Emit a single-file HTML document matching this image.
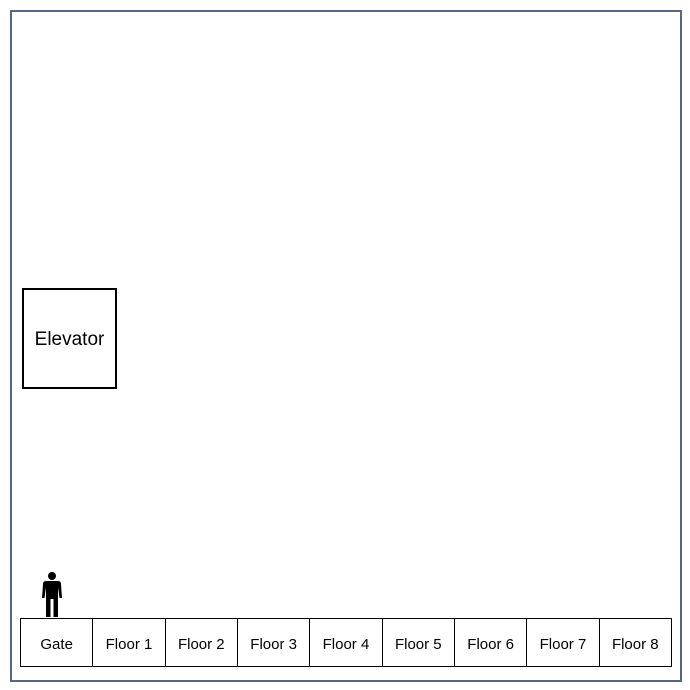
<!DOCTYPE html>
<html><head><style>
body{margin:0;width:690px;height:690px;background:#fff;position:relative;overflow:hidden;font-family:"Liberation Sans",sans-serif;}
.outer{position:absolute;left:10px;top:10px;width:668px;height:668px;border:2px solid #56677f;}
.elev{position:absolute;left:22px;top:288px;width:91px;height:97px;border:2px solid #000;display:flex;align-items:center;justify-content:center;font-size:19px;padding-top:3px;box-sizing:content-box;height:94px;}
.row{position:absolute;left:20px;top:618px;height:49px;width:652px;display:flex;}
.c{flex:1;border:1px solid #000;border-left:none;display:flex;align-items:center;justify-content:center;font-size:15px;box-sizing:border-box;height:49px;padding-top:3px;}
.c:first-child{border-left:1px solid #000;}
</style></head><body>
<div class="outer"></div>
<div class="elev">Elevator</div>
<svg style="position:absolute;left:0;top:0" width="690" height="690">
<circle cx="52" cy="576" r="4" fill="#000"/>
<path d="M46 581 H58 Q61 581 61 584 L62 598 H59.5 L58 587 V617 H53.5 V599 H50.5 V617 H46 V587 L44.5 598 H42 L43 584 Q43 581 46 581Z" fill="#000"/>
</svg>
<div class="row">
<div class="c">Gate</div><div class="c">Floor 1</div><div class="c">Floor 2</div><div class="c">Floor 3</div><div class="c">Floor 4</div><div class="c">Floor 5</div><div class="c">Floor 6</div><div class="c">Floor 7</div><div class="c">Floor 8</div>
</div>
</body></html>
